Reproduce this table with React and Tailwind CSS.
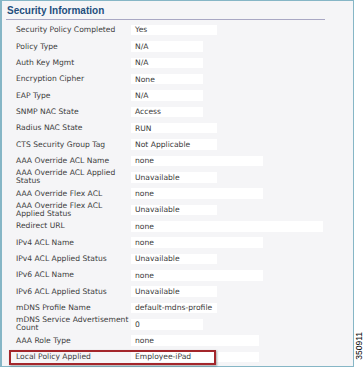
import React from "react";

const rows = [
  { label: ["Security Policy Completed"], value: "Yes", box: "w-[86px]" },
  { label: ["Policy Type"], value: "N/A", box: "w-[72px]" },
  { label: ["Auth Key Mgmt"], value: "N/A", box: "w-[72px]" },
  { label: ["Encryption Cipher"], value: "None", box: "w-[72px]" },
  { label: ["EAP Type"], value: "N/A", box: "w-[72px]" },
  { label: ["SNMP NAC State"], value: "Access", box: "w-[72px]" },
  { label: ["Radius NAC State"], value: "RUN", box: "w-[86px]" },
  { label: ["CTS Security Group Tag"], value: "Not Applicable", box: "w-[86px]" },
  { label: ["AAA Override ACL Name"], value: "none", box: "w-[132px]" },
  { label: ["AAA Override ACL Applied", "Status"], value: "Unavailable", box: "w-[86px]" },
  { label: ["AAA Override Flex ACL"], value: "none", box: "w-[132px]" },
  { label: ["AAA Override Flex ACL", "Applied Status"], value: "Unavailable", box: "w-[86px]" },
  { label: ["Redirect URL"], value: "none", box: "w-[192px]" },
  { label: ["IPv4 ACL Name"], value: "none", box: "w-[132px]" },
  { label: ["IPv4 ACL Applied Status"], value: "Unavailable", box: "w-[86px]" },
  { label: ["IPv6 ACL Name"], value: "none", box: "w-[132px]" },
  { label: ["IPv6 ACL Applied Status"], value: "Unavailable", box: "w-[86px]" },
  { label: ["mDNS Profile Name"], value: "default-mdns-profile", box: "w-[86px]" },
  { label: ["mDNS Service Advertisement", "Count"], value: "0", box: "w-[72px]" },
  { label: ["AAA Role Type"], value: "none", box: "w-[128px]" },
  { label: ["Local Policy Applied"], value: "Employee-iPad", box: "w-[128px]", highlight: true },
];

const InfoRow = ({ row }) => (
  <div className="relative flex items-center h-[16.35px]">
    <div className="w-[129px] pl-[14px] leading-[8px] text-[#404040]">
      {row.label.map((line) => (
        <div key={line}>{line}</div>
      ))}
    </div>
    <div
      className={`${row.box} h-[10.5px] bg-white flex items-center pl-[4px] whitespace-nowrap text-[#3a3a3a]`}
    >
      {row.value}
    </div>
    {row.highlight && (
      <div className="absolute left-[7px] top-[1px] w-[207px] h-[15px] border-2 border-[#a3262b] shadow-[1px_1px_2px_rgba(0,0,0,0.35)]" />
    )}
  </div>
);

export default function App() {
  return (
    <div className="w-[364px] h-[368px] bg-white flex">
      <div className="w-[354px] h-[367px] border border-l-2 border-[#86b6c6] bg-[#f5f5f7] font-['DejaVu_Sans',sans-serif] text-[7.6px]">
        <div className="ml-[4px] w-[319px] h-[19px] border-b border-[#a9a8c4] flex items-center pl-[1px]">
          <span className="font-['Liberation_Sans',Arial,sans-serif] font-bold text-[10px] text-[#234f7d]">
            Security Information
          </span>
        </div>
        <div className="mt-[2px]">
          {rows.map((row) => (
            <InfoRow key={row.label.join(" ")} row={row} />
          ))}
        </div>
      </div>
      <div className="flex-1 flex flex-col justify-end items-center pb-[8px]">
        <span className="[writing-mode:vertical-rl] rotate-180 font-['Liberation_Sans',Arial,sans-serif] text-[8.5px] leading-none text-black">
          350911
        </span>
      </div>
    </div>
  );
}
